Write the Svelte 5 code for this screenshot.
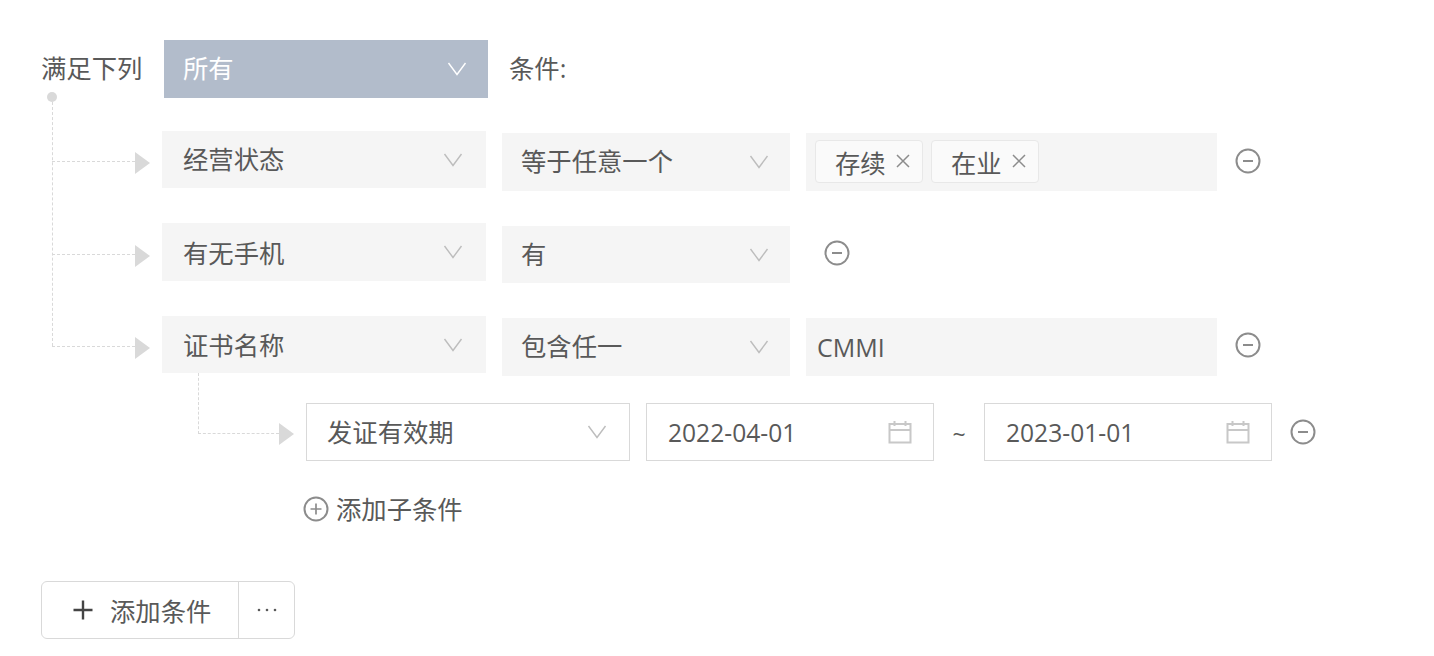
<script>
  const rows = [
    { id: 1, field: "经营状态", op: "等于任意一个", kind: "tags", tags: ["存续", "在业"] },
    { id: 2, field: "有无手机", op: "有", kind: "none" },
    { id: 3, field: "证书名称", op: "包含任一", kind: "text", value: "CMMI" }
  ];
</script>

{#snippet chevron()}
  <svg class="chevron" width="20" height="14" viewBox="0 0 20 14" aria-hidden="true">
    <path d="M1.5 1 L10 12.5 L18.5 1" fill="none" stroke="currentColor" stroke-width="1.4" />
  </svg>
{/snippet}

{#snippet minus()}
  <svg class="round-icon" width="26" height="26" viewBox="0 0 26 26" aria-hidden="true">
    <circle cx="13" cy="13" r="11.5" fill="none" stroke="#8c8c8c" stroke-width="2" />
    <path d="M8 13 H18" stroke="#8c8c8c" stroke-width="2" />
  </svg>
{/snippet}

{#snippet calendar()}
  <svg class="calendar" width="24" height="24" viewBox="0 0 24 24" aria-hidden="true">
    <path d="M1.5 4 H22.5 V22.5 H1.5 Z M1.5 10 H22.5 M6.5 1 V6 M17.5 1 V6" fill="none" stroke="#c8c8c8" stroke-width="2" />
  </svg>
{/snippet}

<main class="page">
  <header class="match">
    <span class="match-label">满足下列</span>
    <div class="select primary">
      <span>所有</span>
      {@render chevron()}
    </div>
    <span class="match-suffix">条件:</span>
  </header>

  <section class="tree">
    <span class="dot"></span>
    <span class="trunk"></span>

    {#each rows as row}
      <div class="row row-{row.id}">
        <span class="branch"></span>
        <div class="select field">
          <span>{row.field}</span>
          {@render chevron()}
        </div>
        <div class="select op">
          <span>{row.op}</span>
          {@render chevron()}
        </div>
        {#if row.kind === "tags"}
          <div class="value">
            {#each row.tags as tag}
              <span class="tag">
                {tag}
                <svg width="14" height="14" viewBox="0 0 14 14" aria-hidden="true">
                  <path d="M1 1 L13 13 M13 1 L1 13" stroke="#8c8c8c" stroke-width="1.5" />
                </svg>
              </span>
            {/each}
          </div>
        {:else if row.kind === "text"}
          <div class="value text">{row.value}</div>
        {/if}
        <button class="remove" type="button" aria-label="删除">{@render minus()}</button>
      </div>
    {/each}

    <div class="sub">
      <span class="sub-branch"></span>
      <div class="select outlined">
        <span>发证有效期</span>
        {@render chevron()}
      </div>
      <div class="date"><span>2022-04-01</span>{@render calendar()}</div>
      <span class="tilde">~</span>
      <div class="date"><span>2023-01-01</span>{@render calendar()}</div>
      <button class="remove" type="button" aria-label="删除">{@render minus()}</button>
    </div>

    <div class="add-sub">
      <svg width="26" height="26" viewBox="0 0 26 26" aria-hidden="true">
        <circle cx="13" cy="13" r="11.5" fill="none" stroke="#8c8c8c" stroke-width="2" />
        <path d="M7.5 13 H18.5 M13 7.5 V18.5" stroke="#8c8c8c" stroke-width="1.7" />
      </svg>
      <span>添加子条件</span>
    </div>
  </section>

  <div class="add-group">
    <button class="add" type="button">
      <svg width="20" height="20" viewBox="0 0 20 20" aria-hidden="true">
        <path d="M0.5 10 H19.5 M10 0.5 V19.5" stroke="#444" stroke-width="2.4" />
      </svg>
      添加条件
    </button>
    <button class="more" type="button" aria-label="更多">
      <svg width="20" height="4" viewBox="0 0 20 4" aria-hidden="true">
        <circle cx="2" cy="2" r="1.3" fill="#595959" />
        <circle cx="10" cy="2" r="1.3" fill="#595959" />
        <circle cx="18" cy="2" r="1.3" fill="#595959" />
      </svg>
    </button>
  </div>
</main>

<style>
  :global(body) {
    background: #fff;
  }

  .page {
    padding: 40px 0 0 41px;
    color: #595959;
    font-family: "Open Sans", "Noto Sans CJK SC", sans-serif;
    font-size: 25.33px;
  }

  .match {
    display: flex;
    align-items: center;
    height: 58px;
  }

  .match-label {
    width: 123px;
    flex-shrink: 0;
    margin-bottom: 4px;
  }

  .match-suffix {
    margin: 0 0 4px 21px;
  }

  .select {
    display: flex;
    align-items: center;
    justify-content: space-between;
    box-sizing: border-box;
    flex-shrink: 0;
    width: 324px;
    height: 57px;
    padding: 0 23px 0 21px;
    background: #f5f5f5;
  }

  .select span {
    margin-bottom: 4px;
  }

  .chevron {
    color: #bdbdbd;
  }

  .primary {
    height: 58px;
    padding: 0 21px 0 19px;
    background: #b2bccb;
    color: #fff;
  }

  .primary .chevron {
    color: #fff;
  }

  .tree {
    position: relative;
    padding: 33px 0 0 121px;
  }

  .dot {
    position: absolute;
    top: -6px;
    left: 6px;
    width: 10px;
    height: 10px;
    border-radius: 50%;
    background: #d9d9d9;
  }

  .trunk {
    position: absolute;
    top: 4px;
    left: 11px;
    height: 244px;
    border-left: 1px dashed #d9d9d9;
  }

  .row {
    position: relative;
    display: flex;
    align-items: flex-start;
    gap: 16px;
    height: 60px;
    margin-bottom: 32px;
  }

  .row-2 {
    height: 61px;
  }

  .row-2 .select.field {
    height: 58px;
  }

  .row-2 .field span {
    margin: 0;
  }

  .row-3 .field span {
    margin-bottom: 2px;
  }

  .row-3 {
    margin-bottom: 27px;
  }

  .branch {
    position: absolute;
    top: 30px;
    left: -110px;
    width: 83px;
    border-top: 1px dashed #d9d9d9;
  }

  .row-2 .branch {
    top: 31px;
  }

  .branch::after,
  .sub-branch::after {
    content: "";
    position: absolute;
    top: -10px;
    right: -15px;
    border-style: solid;
    border-width: 11px 0 11px 15px;
    border-color: transparent transparent transparent #d9d9d9;
  }

  .op {
    width: 288px;
    height: 58px;
    margin-top: 2px;
    padding: 0 21px 0 19px;
  }

  .row-2 .op {
    margin-top: 3px;
    height: 57px;
  }

  .value {
    display: flex;
    align-items: center;
    gap: 8px;
    box-sizing: border-box;
    width: 411px;
    height: 58px;
    margin-top: 2px;
    padding: 0 9px 2px;
    background: #f5f5f5;
  }

  .value.text {
    padding: 0 11px;
    font-size: 25px;
  }

  .tag {
    display: flex;
    align-items: center;
    gap: 10.5px;
    box-sizing: border-box;
    width: 108px;
    height: 43px;
    padding: 1px 0 0 19px;
    border: 1px solid #e8e8e8;
    border-radius: 4px;
    background: #fafafa;
  }

  .tag svg {
    margin-top: -1px;
  }

  .remove {
    display: flex;
    margin: 16px 0 0 2px;
    padding: 0;
    border: 0;
    background: none;
  }

  .row-1 .remove {
    margin-top: 17px;
  }

  .row-2 .remove {
    margin: 17px 0 0 18px;
  }

  .sub {
    position: relative;
    display: flex;
    align-items: center;
    gap: 16px;
    height: 58px;
    margin-left: 144px;
  }

  .sub-branch {
    position: absolute;
    top: 30px;
    left: -108px;
    width: 80px;
    height: 60px;
    margin-top: -60px;
    border-left: 1px dashed #d9d9d9;
    border-bottom: 1px dashed #d9d9d9;
  }

  .sub-branch::after {
    top: auto;
    bottom: -12px;
  }

  .outlined {
    height: 58px;
    border: 1px solid #d9d9d9;
    background: #fff;
    padding: 0 22px 0 20px;
  }

  .outlined span {
    margin-bottom: 2px;
  }

  .date {
    display: flex;
    align-items: center;
    justify-content: space-between;
    box-sizing: border-box;
    width: 288px;
    height: 58px;
    padding: 0 21px;
    border: 1px solid #d9d9d9;
    font-size: 24.6px;
  }

  .date span {
    margin-top: 1px;
  }

  .tilde {
    width: 18px;
    margin-top: 3px;
    text-align: center;
    font-size: 23px;
  }

  .sub .remove {
    margin: 0 0 0 2px;
  }

  .add-sub {
    display: flex;
    align-items: center;
    gap: 7px;
    height: 44px;
    margin: 26px 0 0 141px;
  }

  .add-sub span {
    margin-bottom: 2px;
  }

  .add-group {
    display: flex;
    box-sizing: border-box;
    width: 254px;
    height: 58px;
    margin-top: 50px;
    border: 1px solid #d9d9d9;
    border-radius: 6px;
  }

  .add-group button {
    display: flex;
    align-items: center;
    border: 0;
    padding: 0;
    background: none;
    color: inherit;
    font: inherit;
  }

  .add {
    gap: 17px;
    width: 197px;
    padding-left: 31px !important;
    border-right: 1px solid #d9d9d9 !important;
    box-sizing: border-box;
  }

  .more {
    flex: 1;
    justify-content: center;
  }
</style>
